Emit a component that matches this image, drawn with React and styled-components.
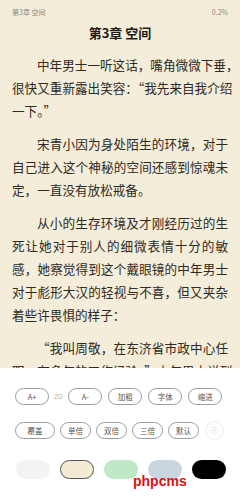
import styled, { createGlobalStyle } from "styled-components";

const GlobalStyle = createGlobalStyle`
  html, body {
    margin: 0;
    padding: 0;
    background: #ffffff;
  }
  body {
    font-family: "Noto Sans CJK SC", "Noto Sans", sans-serif;
  }
`;

const paragraphs = [
  ["中年男士一听这话，嘴角微微下垂，", "很快又重新露出笑容：“我先来自我介绍", "一下。”"],
  ["宋青小因为身处陌生的环境，对于", "自己进入这个神秘的空间还感到惊魂未", "定，一直没有放松戒备。"],
  [
    "从小的生存环境及才刚经历过的生",
    "死让她对于别人的细微表情十分的敏",
    "感，她察觉得到这个戴眼镜的中年男士",
    "对于彪形大汉的轻视与不喜，但又夹杂",
    "着些许畏惧的样子：",
  ],
  ["“我叫周敬，在东济省市政中心任", "职，有多年的工作经验。”中年男士说到"],
];

const sizeButtons = ["加粗", "字体", "缩进"];
const spacingButtons = [
  { label: "覆盖", wide: true },
  { label: "单倍" },
  { label: "双倍" },
  { label: "三倍" },
  { label: "默认" },
];
const themes = [
  { bg: "#f3f3f3" },
  { bg: "#f3ead3", active: true },
  { bg: "#bfe8c6" },
  { bg: "#c9d5df" },
  { bg: "#000000" },
];

export default function App() {
  return (
    <>
      <GlobalStyle />
      <Screen lang="zh-CN">
        <Reader>
          <StatusBar>
            <span>第3章 空间</span>
            <span>0.2%</span>
          </StatusBar>
          <ChapterTitle>第3章 空间</ChapterTitle>
          {paragraphs.map((lines, i) => (
            <Paragraph key={i}>
              {lines.map((line, j) => (
                <Line key={j} $first={j === 0} $last={j === lines.length - 1}>
                  {line}
                </Line>
              ))}
            </Paragraph>
          ))}
        </Reader>
        <SettingsPanel>
          <ButtonRow>
            <Pill>A+</Pill>
            <FontSize>20</FontSize>
            <Pill>A-</Pill>
            {sizeButtons.map((b) => (
              <Pill key={b}>{b}</Pill>
            ))}
          </ButtonRow>
          <ButtonRow $gap={5}>
            {spacingButtons.map((b) => (
              <Pill key={b.label} $wide={b.wide} $small={!b.wide}>
                {b.label}
              </Pill>
            ))}
            <FaintIcon>
              <svg width="19" height="19" viewBox="0 0 19 19" fill="none">
                <circle cx="9.5" cy="9.5" r="8.8" stroke="#ececec" strokeWidth="1" />
                <path d="M9.5 4v11M4.5 9.5h10M6.5 7h6M6.5 12h6" stroke="#ececec" strokeWidth="1" />
              </svg>
            </FaintIcon>
          </ButtonRow>
          <ThemeRow>
            {themes.map((t, i) => (
              <ThemeSwatch key={i} $bg={t.bg} $active={t.active} />
            ))}
          </ThemeRow>
          <Watermark>phpcms</Watermark>
        </SettingsPanel>
      </Screen>
    </>
  );
}

const Screen = styled.div`
  width: 240px;
  height: 500px;
  display: flex;
  flex-direction: column;
  overflow: hidden;
  background: #f4edd9;
`;

const Reader = styled.div`
  flex: 1;
  overflow: hidden;
  padding: 0 12px;
  color: #2e2a24;
`;

const StatusBar = styled.div`
  display: flex;
  justify-content: space-between;
  padding-top: 7px;
  font-size: 7px;
  line-height: 10px;
  color: #8c877c;
`;

const ChapterTitle = styled.h1`
  margin: 6px 0 10px;
  font-size: 13px;
  line-height: 20px;
  font-weight: 700;
  text-align: center;
  color: #1f1c18;
`;

const Paragraph = styled.div`
  margin-bottom: 10px;
`;

const Line = styled.div`
  font-size: 12.6px;
  line-height: 23px;
  white-space: nowrap;
  text-align: justify;
  text-align-last: ${(p) => (p.$last ? "left" : "justify")};
  padding-left: ${(p) => (p.$first ? "25px" : "0")};
`;

const SettingsPanel = styled.div`
  position: relative;
  flex: 0 0 132px;
  background: #ffffff;
  padding: 20px 0 0 15px;
  box-sizing: border-box;
  display: flex;
  flex-direction: column;
`;

const ButtonRow = styled.div`
  display: flex;
  align-items: center;
  gap: ${(p) => p.$gap ?? 6}px;
  height: 17px;
  margin-bottom: 17px;
`;

const Pill = styled.div`
  box-sizing: border-box;
  width: ${(p) => (p.$wide ? 40 : p.$small ? 31 : 34)}px;
  height: 17px;
  border: 1px solid #9c9c9c;
  border-radius: 9px;
  display: flex;
  align-items: center;
  justify-content: center;
  font-size: 7.5px;
  color: #555555;
  font-family: "Noto Sans CJK SC", "Liberation Sans", sans-serif;
`;

const FontSize = styled.span`
  font-size: 7.5px;
  color: #b0b0b0;
  font-family: "Liberation Sans", sans-serif;
  margin: 0 0 0 -1px;
`;

const FaintIcon = styled.div`
  display: flex;
  align-items: center;
  margin-left: 1px;
`;

const ThemeRow = styled.div`
  display: flex;
  gap: 10px;
  margin-top: 4px;
  padding-left: 1px;
`;

const ThemeSwatch = styled.div`
  box-sizing: border-box;
  width: 34px;
  height: 19px;
  border-radius: 10px;
  background: ${(p) => p.$bg};
  border: ${(p) => (p.$active ? "1px solid #555555" : "none")};
`;

const Watermark = styled.div`
  position: absolute;
  left: 133px;
  top: 106px;
  font-family: "Liberation Sans", sans-serif;
  font-weight: 700;
  font-size: 14px;
  line-height: 14px;
  color: #dd1111;
`;
